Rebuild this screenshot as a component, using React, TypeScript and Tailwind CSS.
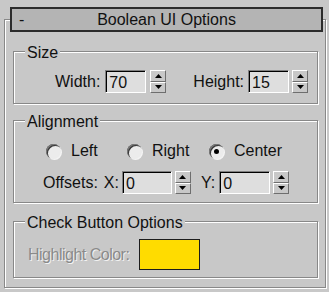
import React from "react";

function Spinner() {
  return (
    <div className="flex h-[23px] w-[16px] flex-col">
      <div className="flex flex-1 items-center justify-center border border-b-[#6e6e6e] border-l-white border-r-[#6e6e6e] border-t-white bg-[#c8c8c8]">
        <svg width="7" height="4" viewBox="0 0 7 4">
          <path d="M3.5 0 L7 4 L0 4 Z" fill="#000" />
        </svg>
      </div>
      <div className="flex flex-1 items-center justify-center border border-b-[#6e6e6e] border-l-white border-r-[#6e6e6e] border-t-white bg-[#c8c8c8]">
        <svg width="7" height="4" viewBox="0 0 7 4">
          <path d="M0 0 L7 0 L3.5 4 Z" fill="#000" />
        </svg>
      </div>
    </div>
  );
}

function Field({ value, className }: { value: string; className: string }) {
  return (
    <div
      className={
        "h-[23px] border border-b-white border-l-[#808080] border-r-white border-t-[#808080] bg-[#dedede] pl-[3px] pt-[3px] leading-[18px] text-[#111] shadow-[inset_1px_1px_0_#000] " +
        className
      }
    >
      {value}
    </div>
  );
}

function Radio({ checked }: { checked?: boolean }) {
  return (
    <div className="flex h-[15px] w-[15px] items-center justify-center rounded-full bg-[#ececec] shadow-[inset_1px_1px_0_#7a7a7a,inset_2px_2px_0_#3a3a3a,1px_1px_0_#f4f4f4]">
      {checked ? <div className="h-[5px] w-[5px] rounded-full bg-black" /> : null}
    </div>
  );
}

function GroupLabel({ text }: { text: string }) {
  return (
    <div className="-mt-[8px] ml-[11px] h-[18px] w-fit bg-[#c8c8c8] px-[2px]">
      {text}
    </div>
  );
}

export default function App() {
  return (
    <div className="h-[292px] w-[329px] overflow-hidden bg-[#c8c8c8] font-['Liberation_Sans',Arial,sans-serif] text-[16px] leading-[18px] text-[#111]">
      <div className="h-[19px]" />
      <div className="ml-[4px] flex h-[269px] w-[322px] flex-col border border-[#888] shadow-[inset_1px_1px_0_#fff,1px_1px_0_#fff]">
        {/* Title bar */}
        <div className="-mt-[13px] ml-[5px] grid h-[25px] w-[313px] grid-cols-[1fr_auto_1fr] items-center border-2 border-[#2c2c2c] bg-[#b4b4b4]">
          <span className="pl-[7px]">-</span>
          <span>Boolean UI Options</span>
          <span />
        </div>

        {/* Size */}
        <div className="ml-[8px] mt-[19px] flex h-[53px] w-[305px] flex-col border border-[#888] shadow-[inset_1px_1px_0_#fff,1px_1px_0_#fff]">
          <GroupLabel text="Size" />
          <div className="mt-[8px] flex h-[23px] items-center pl-[41px]">
            <span>Width:</span>
            <Field value="70" className="ml-[5px] w-[41px]" />
            <div className="ml-[4px]">
              <Spinner />
            </div>
            <span className="ml-[27px]">Height:</span>
            <Field value="15" className="ml-[4px] w-[41px]" />
            <div className="ml-[3px]">
              <Spinner />
            </div>
          </div>
        </div>

        {/* Alignment */}
        <div className="ml-[8px] mt-[16px] flex h-[83px] w-[305px] flex-col border border-[#888] shadow-[inset_1px_1px_0_#fff,1px_1px_0_#fff]">
          <GroupLabel text="Alignment" />
          <div className="mt-[11px] flex h-[18px] items-center pl-[32px]">
            <div className="flex w-[81px] items-center">
              <Radio />
              <span className="ml-[10px]">Left</span>
            </div>
            <div className="flex w-[82px] items-center">
              <Radio />
              <span className="ml-[10px]">Right</span>
            </div>
            <div className="flex items-center">
              <Radio checked />
              <span className="ml-[10px]">Center</span>
            </div>
          </div>
          <div className="mt-[11px] flex h-[23px] items-center pl-[29px]">
            <span>Offsets:</span>
            <span className="ml-[6px]">X:</span>
            <Field value="0" className="ml-[3px] w-[50px]" />
            <div className="ml-[3px]">
              <Spinner />
            </div>
            <span className="ml-[10px]">Y:</span>
            <Field value="0" className="ml-[4px] w-[51px]" />
            <div className="ml-[3px]">
              <Spinner />
            </div>
          </div>
        </div>

        {/* Check Button Options */}
        <div className="ml-[8px] mt-[18px] flex h-[57px] w-[305px] flex-col border border-[#888] shadow-[inset_1px_1px_0_#fff,1px_1px_0_#fff]">
          <GroupLabel text="Check Button Options" />
          <div className="mt-[7px] flex h-[31px] items-center pl-[14px]">
            <span className="w-[111px] tracking-[-0.5px] text-[#8a8a8a] [text-shadow:1px_1px_0_#f2f2f2]">
              Highlight Color:
            </span>
            <div className="h-[31px] w-[61px] border-[1.5px] border-[#1c1c1c] bg-[#ffdc00]" />
          </div>
        </div>
      </div>
    </div>
  );
}
